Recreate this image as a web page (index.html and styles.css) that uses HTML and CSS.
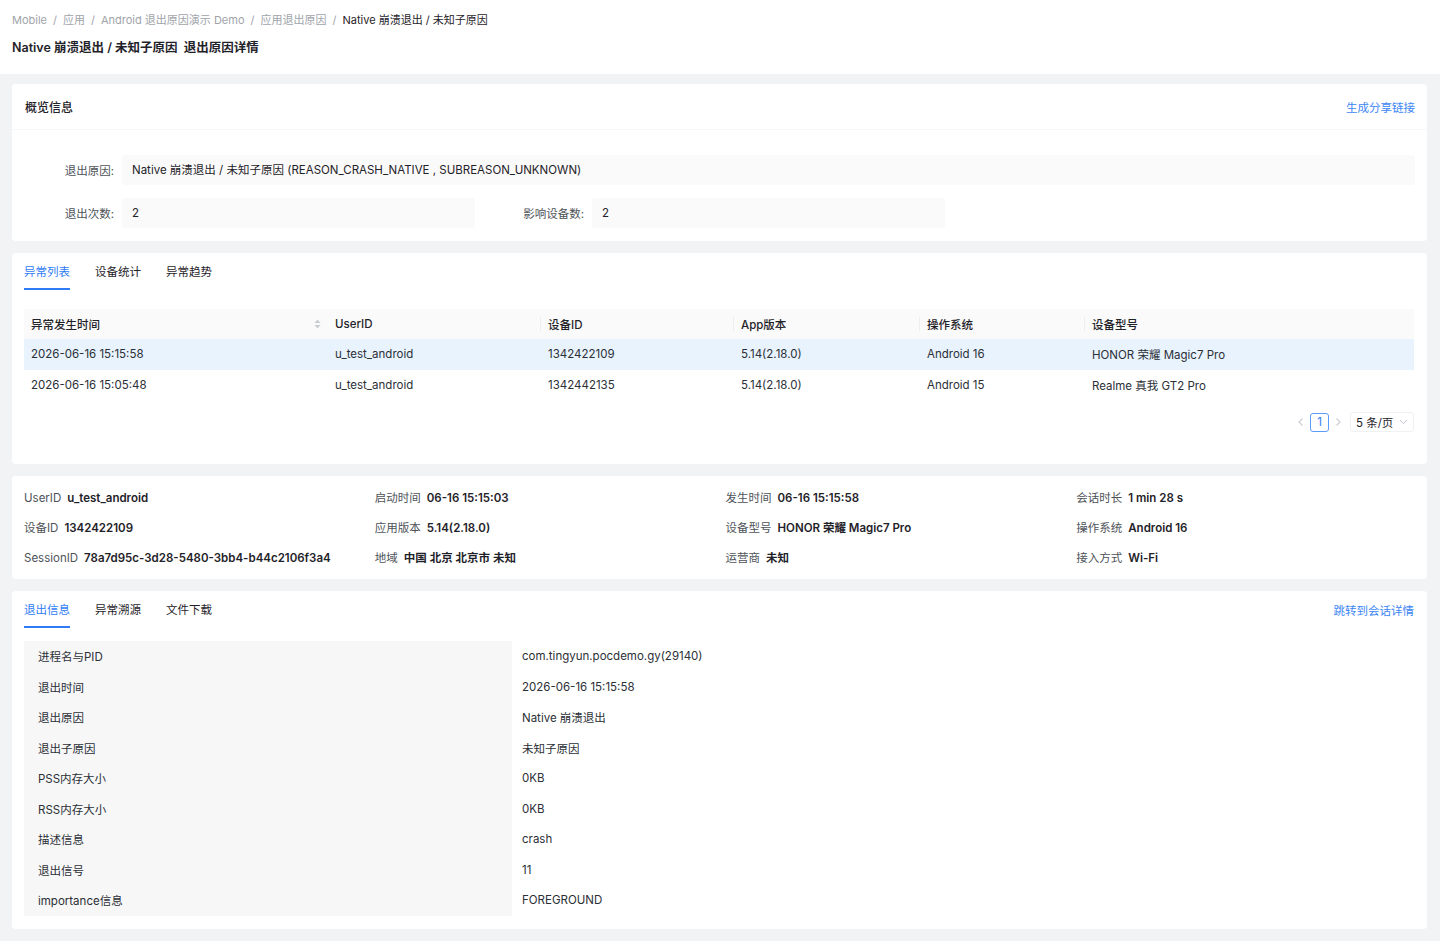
FILE: index.html
```html
<!DOCTYPE html>
<html lang="zh-CN">
<head>
    <meta charset="UTF-8">
    <title>退出原因详情</title>
    <link rel="stylesheet" href="styles.css">
</head>
<body>
    <div class="page-header">
        <div class="breadcrumb">
            <span>Mobile</span><i>/</i>
            <span>应用</span><i>/</i>
            <span>Android 退出原因演示 Demo</span><i>/</i>
            <span>应用退出原因</span><i>/</i>
            <span class="current">Native 崩溃退出 / 未知子原因</span>
        </div>
        <h1 class="page-title">Native 崩溃退出 / 未知子原因&nbsp;&nbsp;退出原因详情</h1>
    </div>

    <div class="content">
        <!-- overview -->
        <div class="card">
            <div class="card-head">
                <span class="card-title">概览信息</span>
                <a class="link">生成分享链接</a>
            </div>
            <div class="overview">
                <div class="ov-row">
                    <label>退出原因:</label>
                    <div class="ov-value wide">Native 崩溃退出 / 未知子原因 (REASON_CRASH_NATIVE , SUBREASON_UNKNOWN)</div>
                </div>
                <div class="ov-row">
                    <label>退出次数:</label>
                    <div class="ov-value half">2</div>
                    <label class="second">影响设备数:</label>
                    <div class="ov-value half">2</div>
                </div>
            </div>
        </div>

        <!-- exception list -->
        <div class="card card-pad">
            <div class="tabs">
                <span class="tab active">异常列表</span>
                <span class="tab">设备统计</span>
                <span class="tab">异常趋势</span>
            </div>
            <table class="list">
                <colgroup>
                    <col style="width:303px">
                    <col style="width:213px">
                    <col style="width:193px">
                    <col style="width:186px">
                    <col style="width:165px">
                    <col>
                </colgroup>
                <thead>
                    <tr>
                        <th class="sortable">异常发生时间
                            <svg class="sort" width="7" height="10" viewBox="0 0 7 10"><path d="M3.5 0.5L6.5 4H0.5Z" fill="#c9ccd1"/><path d="M3.5 9.5L0.5 6H6.5Z" fill="#c9ccd1"/></svg>
                        </th>
                        <th>UserID</th>
                        <th class="sep">设备ID</th>
                        <th class="sep">App版本</th>
                        <th class="sep">操作系统</th>
                        <th class="sep">设备型号</th>
                    </tr>
                </thead>
                <tbody>
                    <tr class="selected">
                        <td>2026-06-16 15:15:58</td>
                        <td>u_test_android</td>
                        <td>1342422109</td>
                        <td>5.14(2.18.0)</td>
                        <td>Android 16</td>
                        <td>HONOR 荣耀 Magic7 Pro</td>
                    </tr>
                    <tr>
                        <td>2026-06-16 15:05:48</td>
                        <td>u_test_android</td>
                        <td>1342442135</td>
                        <td>5.14(2.18.0)</td>
                        <td>Android 15</td>
                        <td>Realme 真我 GT2 Pro</td>
                    </tr>
                </tbody>
            </table>
            <div class="pager">
                <svg class="arrow" width="8" height="10" viewBox="0 0 8 10"><path d="M5.5 1.5L2 5l3.5 3.5" fill="none" stroke="#c9ccd1" stroke-width="1.1"/></svg>
                <span class="page-num">1</span>
                <svg class="arrow" width="8" height="10" viewBox="0 0 8 10"><path d="M2.5 1.5L6 5 2.5 8.5" fill="none" stroke="#c9ccd1" stroke-width="1.1"/></svg>
                <span class="page-size">5 条/页
                    <svg width="9" height="6" viewBox="0 0 9 6"><path d="M1 1l3.5 3.5L8 1" fill="none" stroke="#c0c4cc" stroke-width="1"/></svg>
                </span>
            </div>
        </div>

        <!-- session info -->
        <div class="card">
            <div class="info-grid">
                <div><span class="k">UserID</span><span class="v">u_test_android</span></div>
                <div><span class="k">启动时间</span><span class="v">06-16 15:15:03</span></div>
                <div><span class="k">发生时间</span><span class="v">06-16 15:15:58</span></div>
                <div><span class="k">会话时长</span><span class="v">1 min 28 s</span></div>
                <div><span class="k">设备ID</span><span class="v">1342422109</span></div>
                <div><span class="k">应用版本</span><span class="v">5.14(2.18.0)</span></div>
                <div><span class="k">设备型号</span><span class="v">HONOR 荣耀 Magic7 Pro</span></div>
                <div><span class="k">操作系统</span><span class="v">Android 16</span></div>
                <div><span class="k">SessionID</span><span class="v">78a7d95c-3d28-5480-3bb4-b44c2106f3a4</span></div>
                <div><span class="k">地域</span><span class="v">中国 北京 北京市 未知</span></div>
                <div><span class="k">运营商</span><span class="v">未知</span></div>
                <div><span class="k">接入方式</span><span class="v">Wi-Fi</span></div>
            </div>
        </div>

        <!-- exit detail -->
        <div class="card card-pad">
            <div class="tabs">
                <span class="tab active">退出信息</span>
                <span class="tab">异常溯源</span>
                <span class="tab">文件下载</span>
                <a class="link push">跳转到会话详情</a>
            </div>
            <table class="detail">
                <tr><th>进程名与PID</th><td>com.tingyun.pocdemo.gy(29140)</td></tr>
                <tr><th>退出时间</th><td>2026-06-16 15:15:58</td></tr>
                <tr><th>退出原因</th><td>Native 崩溃退出</td></tr>
                <tr><th>退出子原因</th><td>未知子原因</td></tr>
                <tr><th>PSS内存大小</th><td>0KB</td></tr>
                <tr><th>RSS内存大小</th><td>0KB</td></tr>
                <tr><th>描述信息</th><td>crash</td></tr>
                <tr><th>退出信号</th><td>11</td></tr>
                <tr><th>importance信息</th><td>FOREGROUND</td></tr>
            </table>
        </div>
    </div>
</body>
</html>
```

FILE: styles.css
```css
* {
    box-sizing: border-box;
}
body {
    margin: 0;
    background: #f2f3f5;
    font-family: Inter, "Noto Sans CJK SC", sans-serif;
    font-size: 11.5px;
    color: #1f2329;
}
.page-header {
    background: #fff;
    padding: 12px 12px 0;
    height: 74px;
}
.breadcrumb {
    display: flex;
    color: #a0a4aa;
    font-size: 11px;
    line-height: 16px;
}
.breadcrumb i {
    font-style: normal;
    margin: 0 6px;
}
.breadcrumb .current {
    color: #1f2329;
}
.page-title {
    margin: 11px 0 0;
    font-size: 12.5px;
    font-weight: 600;
    line-height: 18px;
}
.content {
    padding: 10px 13px 12px 12px;
    display: flex;
    flex-direction: column;
    gap: 12px;
}
.card {
    background: #fff;
    border-radius: 4px;
}
.card-pad {
    padding: 0 13px 0 12px;
}
.link {
    color: #3d86f5;
    cursor: pointer;
}
.card-head {
    display: flex;
    justify-content: space-between;
    align-items: center;
    height: 46px;
    padding: 0 12px 0 13px;
    border-bottom: 1px solid #f6f7f8;
}
.card-title {
    font-size: 12px;
    font-weight: 500;
}
.overview {
    padding: 25px 12px 13px 0;
    display: flex;
    flex-direction: column;
    gap: 13px;
}
.ov-row {
    display: flex;
    align-items: center;
}
.ov-row label {
    width: 110px;
    text-align: right;
    padding-right: 8px;
    color: #4e5359;
}
.ov-row label.second {
    width: 117px;
}
.ov-value {
    height: 30px;
    line-height: 30px;
    background: #fafafa;
    border-radius: 3px;
    padding: 0 10px;
}
.ov-value.wide {
    flex: 1;
}
.ov-value.half {
    width: 353px;
}
.tabs {
    display: flex;
    align-items: center;
    gap: 25px;
    height: 37px;
}
.tab {
    height: 37px;
    line-height: 38px;
    position: relative;
}
.tab.active {
    color: #2f7cf6;
}
.tab.active::after {
    content: "";
    position: absolute;
    left: 0;
    right: 0;
    bottom: 0;
    height: 2px;
    background: #2f7cf6;
}
.tabs .push {
    margin-left: auto;
}
.list {
    width: 100%;
    margin-top: 19px;
    border-collapse: collapse;
    table-layout: fixed;
}
.list th {
    background: #fafafa;
    font-weight: 500;
    text-align: left;
    height: 30px;
    padding: 0 7px;
    position: relative;
}
.list th + th {
    padding-left: 8px;
}
.list th.sep::before {
    content: "";
    position: absolute;
    left: 0;
    top: 8px;
    bottom: 8px;
    width: 1px;
    background: #eceef0;
}
.list th .sort {
    position: absolute;
    right: 6px;
    top: 10px;
}
.list td {
    height: 30.5px;
    padding: 0 7px;
    color: #2b2f36;
}
.list td + td {
    padding-left: 8px;
}
.list tr.selected td {
    background: #e8f3fe;
}
.pager {
    display: flex;
    justify-content: flex-end;
    align-items: center;
    gap: 5px;
    margin-top: 12px;
    padding-bottom: 32px;
}
.page-num {
    width: 19px;
    height: 19px;
    line-height: 17px;
    text-align: center;
    border: 1px solid #5b9cf8;
    border-radius: 3px;
    color: #2f7cf6;
}
.page-size {
    margin-left: 3px;
    height: 20px;
    width: 64px;
    border: 1px solid #f0f1f3;
    border-radius: 3px;
    display: flex;
    align-items: center;
    justify-content: space-between;
    padding: 0 5px 0 5px;
}
.info-grid {
    display: grid;
    grid-template-columns: repeat(4, 1fr);
    row-gap: 12px;
    padding: 13px 0 12px 12px;
    line-height: 18px;
}
.info-grid .k {
    color: #4e5359;
    margin-right: 6px;
}
.info-grid .v {
    font-weight: 600;
}
.detail {
    width: 100%;
    margin: 13px 0 13px;
    border-collapse: collapse;
}
.detail th {
    width: 488px;
    background: #f7f7f8;
    font-weight: normal;
    text-align: left;
    padding: 0 14px;
    height: 30.5px;
    color: #2b2f36;
}
.detail td {
    padding: 0 10px;
    color: #2b2f36;
}
```
